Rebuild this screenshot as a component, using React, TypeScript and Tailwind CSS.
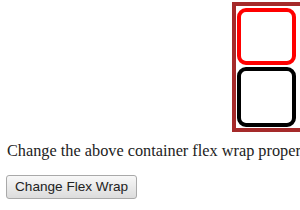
export default function App() {
  return (
    <div className="w-[300px] h-[210px] overflow-hidden bg-white" style={{ fontFamily: '"Liberation Serif", serif' }}>
      <div className="ml-[232px] mt-[2px] w-[80px] border-[4px] border-[#a52a2a] pt-[2px] pl-[1px] pb-[1px] flex flex-col gap-[2px]">
        <div className="w-[59px] h-[57px] rounded-[9px] border-[4px] border-[#ff0000] bg-white" />
        <div className="w-[59px] h-[60px] rounded-[9px] border-[4px] border-black bg-white" />
      </div>
      <p className="mt-[9px] ml-[7px] text-[16.3px] leading-[20px] text-[#222] whitespace-nowrap">
        Change the above container flex wrap property
      </p>
      <button className="mt-[14px] ml-[6px] h-[24px] px-[8px] rounded-[3px] border border-[#a9a9a9] bg-gradient-to-b from-[#f8f8f8] to-[#dcdcdc] text-[13.6px] text-[#222]" style={{ fontFamily: '"Liberation Sans", sans-serif' }}>
        Change Flex Wrap
      </button>
    </div>
  );
}
